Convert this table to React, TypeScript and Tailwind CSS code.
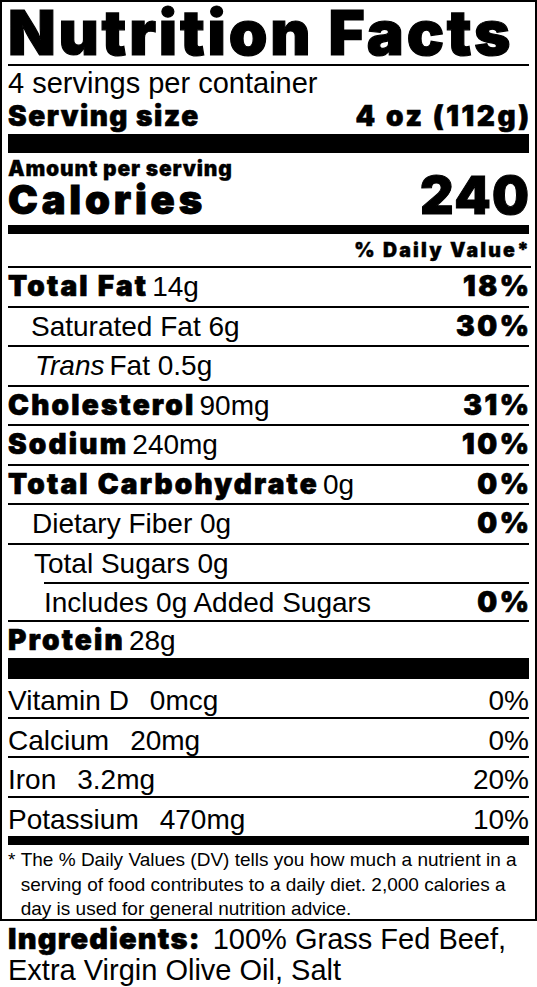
import type { ReactNode } from "react";

const heavy = "font-['Inter','Liberation_Sans',sans-serif] font-black";
const regular = "font-['Liberation_Sans',Arial,sans-serif]";

const NutrientRow = ({
  children,
  dv,
  size = "h-[39.5px] leading-[37.5px]",
  className = "",
  line = true,
}: {
  children: ReactNode;
  dv?: string;
  size?: string;
  className?: string;
  line?: boolean;
}) => (
  <div
    className={`flex items-baseline justify-between ${size} ${
      line ? "border-b-2 border-black" : ""
    } ${className}`}
  >
    <div className="flex items-baseline text-[28px]">{children}</div>
    {dv && (
      <span
        className={`${heavy} -mr-[2.6px] text-[28px] tracking-[2.6px] [-webkit-text-stroke:0.7px_black]`}
      >
        {dv}
      </span>
    )}
  </div>
);

const Bold = ({ children }: { children: ReactNode }) => (
  <span
    className={`${heavy} mr-[4px] tracking-[2.2px] [-webkit-text-stroke:0.7px_black]`}
  >
    {children}
  </span>
);

const Reg = ({ children }: { children: ReactNode }) => (
  <span className={regular}>{children}</span>
);

const vitamins = [
  { name: "Vitamin D", amount: "0mcg", dv: "0%" },
  { name: "Calcium", amount: "20mg", dv: "0%" },
  { name: "Iron", amount: "3.2mg", dv: "20%" },
  { name: "Potassium", amount: "470mg", dv: "10%" },
];

export default function App() {
  return (
    <div className="h-[987px] w-[537px] overflow-hidden bg-white text-black">
      {/* Label box */}
      <div className="h-[921px] border-2 border-black px-[6px]">
        <h1
          className={`${heavy} h-[64px] border-b-2 border-black text-[62px] leading-[62px] tracking-[2.8px] [-webkit-text-stroke:1.2px_black]`}
        >
          Nutrition Facts
        </h1>

        <div className={`${regular} pt-[2px] text-[29px] leading-[30px]`}>
          4 servings per container
        </div>
        <div
          className={`${heavy} flex h-[36px] items-center justify-between text-[28px] leading-[36px] [-webkit-text-stroke:0.6px_black]`}
        >
          <span className="tracking-[1.5px]">Serving size</span>
          <span className="-mr-[2.6px] tracking-[2.6px]">4 oz (112g)</span>
        </div>

        <div className="h-[19px] bg-black" />

        <div className={`${heavy} flex h-[72px] items-start justify-between`}>
          <div className="flex flex-col">
            <span className="mt-[4px] text-[21px] leading-[24px] tracking-[0.8px] [-webkit-text-stroke:0.3px_black]">
              Amount per serving
            </span>
            <span className="text-[40px] leading-[38px] tracking-[3.8px] [-webkit-text-stroke:0.9px_black]">
              Calories
            </span>
          </div>
          <span className="-mr-[1.3px] mt-[17px] text-[52px] leading-[52px] tracking-[1.3px] [-webkit-text-stroke:1px_black]">
            240
          </span>
        </div>

        <div className="h-[9px] bg-black" />

        <div
          className={`${heavy} -mr-[2.2px] h-[34px] border-b-2 border-black text-right text-[19.5px] leading-[32px] tracking-[2.2px] [-webkit-text-stroke:0.4px_black]`}
        >
          % Daily Value*
        </div>

        <NutrientRow dv="18%">
          <Bold>Total Fat</Bold>
          <Reg>14g</Reg>
        </NutrientRow>
        <NutrientRow dv="30%" className="pl-[23px]">
          <Reg>Saturated Fat 6g</Reg>
        </NutrientRow>
        <NutrientRow className="pl-[27px]">
          <Reg>
            <i>Trans</i>
            <span className="ml-[5px]">Fat 0.5g</span>
          </Reg>
        </NutrientRow>
        <NutrientRow dv="31%">
          <Bold>Cholesterol</Bold>
          <Reg>90mg</Reg>
        </NutrientRow>
        <NutrientRow dv="10%">
          <Bold>Sodium</Bold>
          <Reg>240mg</Reg>
        </NutrientRow>
        <NutrientRow dv="0%">
          <Bold>Total Carbohydrate</Bold>
          <Reg>0g</Reg>
        </NutrientRow>
        <NutrientRow dv="0%" className="pl-[24px]">
          <Reg>Dietary Fiber 0g</Reg>
        </NutrientRow>
        <NutrientRow line={false} size="h-[37.5px] leading-[37.5px]" className="pl-[26px]">
          <Reg>Total Sugars 0g</Reg>
        </NutrientRow>
        <div className="ml-[36px] border-t-2 border-black" />
        <NutrientRow dv="0%" size="h-[37.5px] leading-[35.5px]">
          <span className="pl-[36px]">
            <Reg>Includes 0g Added Sugars</Reg>
          </span>
        </NutrientRow>
        <NutrientRow line={false} size="h-[36.5px] leading-[36.5px]">
          <Bold>Protein</Bold>
          <Reg>28g</Reg>
        </NutrientRow>

        <div className="h-[21px] bg-black" />

        {vitamins.map((v, i) => (
          <div
            key={v.name}
            className={`${regular} flex items-baseline justify-between pt-[4px] text-[28px] leading-[35.5px] ${
              i < 3 ? "h-[39.5px] border-b-2 border-black" : "h-[38.5px]"
            }`}
          >
            <span>
              {v.name}
              <span className="ml-[21px]">{v.amount}</span>
            </span>
            <span>{v.dv}</span>
          </div>
        ))}

        <div className="h-[9px] bg-black" />

        <div className={`${regular} flex pt-[3px] text-[19px] leading-[24.5px]`}>
          <span className="w-[12.7px] shrink-0">*</span>
          <p>
            The % Daily Values (DV) tells you how much a nutrient in a
            <br />
            serving of food contributes to a daily diet. 2,000 calories a
            <br />
            day is used for general nutrition advice.
          </p>
        </div>
      </div>

      {/* Ingredients */}
      <div className="px-[8px] pt-[2px] text-[29px] leading-[30px]">
        <span className={`${heavy} tracking-[1.2px] [-webkit-text-stroke:0.6px_black]`}>
          Ingredients:
        </span>
        <span className={`${regular} ml-[12px]`}>100% Grass Fed Beef,</span>
        <br />
        <span className={regular}>Extra Virgin Olive Oil, Salt</span>
      </div>
    </div>
  );
}
